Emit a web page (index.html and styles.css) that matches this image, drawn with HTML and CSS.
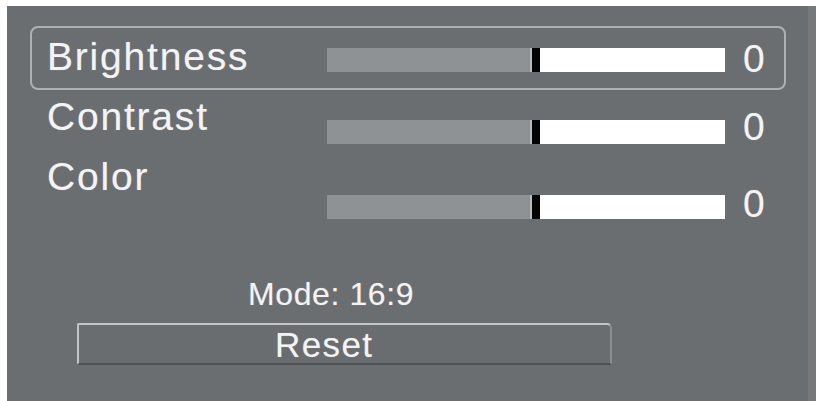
FILE: index.html
```html
<!DOCTYPE html>
<html>
<head>
<meta charset="utf-8">
<link rel="stylesheet" href="styles.css">
</head>
<body>
<div class="panel">
  <div class="row row-1 selected">
    <div class="label">Brightness</div>
    <div class="bar"><span class="fill"></span><span class="knob"></span><span class="rest"></span></div>
    <div class="value">0</div>
  </div>
  <div class="row row-2">
    <div class="label">Contrast</div>
    <div class="bar"><span class="fill"></span><span class="knob"></span><span class="rest"></span></div>
    <div class="value">0</div>
  </div>
  <div class="row row-3">
    <div class="label">Color</div>
    <div class="bar"><span class="fill"></span><span class="knob"></span><span class="rest"></span></div>
    <div class="value">0</div>
  </div>
  <div class="mode">Mode: 16:9</div>
  <div class="reset">Reset</div>
</div>
</body>
</html>
```

FILE: styles.css
```css
html, body {
  margin: 0;
  padding: 0;
  background: #ffffff;
}

body {
  width: 818px;
  height: 401px;
  overflow: hidden;
  font-family: "Liberation Sans", Arial, sans-serif;
}

.panel {
  margin: 6px 0 0 7px;
  width: 809px;
  height: 395px;
  background: #6b6e70;
  border-right: 8px solid #76787a;
  padding-top: 20px;
  box-sizing: border-box;
  color: #f3f3f3;
  text-shadow: 0 0 1px rgba(255, 255, 255, 0.35);
}

.row {
  display: flex;
  align-items: flex-start;
  width: 756px;
  margin-left: 23px;
  padding-left: 15px;
  box-sizing: border-box;
  border: 2px solid transparent;
  border-radius: 8px;
}

.row.selected {
  border-color: #aeb1b3;
}

.row-1 { height: 64px; }
.row-2 { height: 60px; }
.row-3 { height: 60px; }

.label {
  flex: 0 0 280px;
  font-size: 39px;
  line-height: 45px;
  letter-spacing: 1.8px;
}

.bar {
  flex: 0 0 398px;
  height: 24px;
  display: flex;
  text-shadow: none;
}

.fill {
  flex: 0 0 203px;
  background: #8f9294;
  border-right: 2px solid #b9bbbc;
}

.knob {
  flex: 0 0 8px;
  background: #050505;
}

.rest {
  flex: 1 1 auto;
  background: #ffffff;
}

.value {
  margin-left: 18px;
  font-size: 39px;
  line-height: 45px;
}

.row-1 .label { margin-top: 6px; }
.row-1 .bar { margin-top: 20px; }
.row-1 .value { margin-top: 8px; }

.row-2 .label { margin-top: 2px; }
.row-2 .bar { margin-top: 28px; }
.row-2 .value { margin-top: 12px; }

.row-3 .label { margin-top: 2px; }
.row-3 .bar { margin-top: 43px; }
.row-3 .value { margin-top: 29px; }

.mode {
  margin: 66px 0 0 241px;
  font-size: 32px;
  line-height: 36px;
  letter-spacing: 0.6px;
}

.reset {
  margin: 11px 0 0 70px;
  width: 535px;
  height: 42px;
  box-sizing: border-box;
  padding: 1px 0 0 196px;
  font-size: 35px;
  line-height: 38px;
  letter-spacing: 1.4px;
  background: #6a6d6f;
  border-top: 2px solid #c2c4c6;
  border-left: 2px solid #c2c4c6;
  border-bottom: 2px solid #505355;
  border-right: 2px solid #8a8d8f;
  border-radius: 2px 5px 2px 2px;
}
```
